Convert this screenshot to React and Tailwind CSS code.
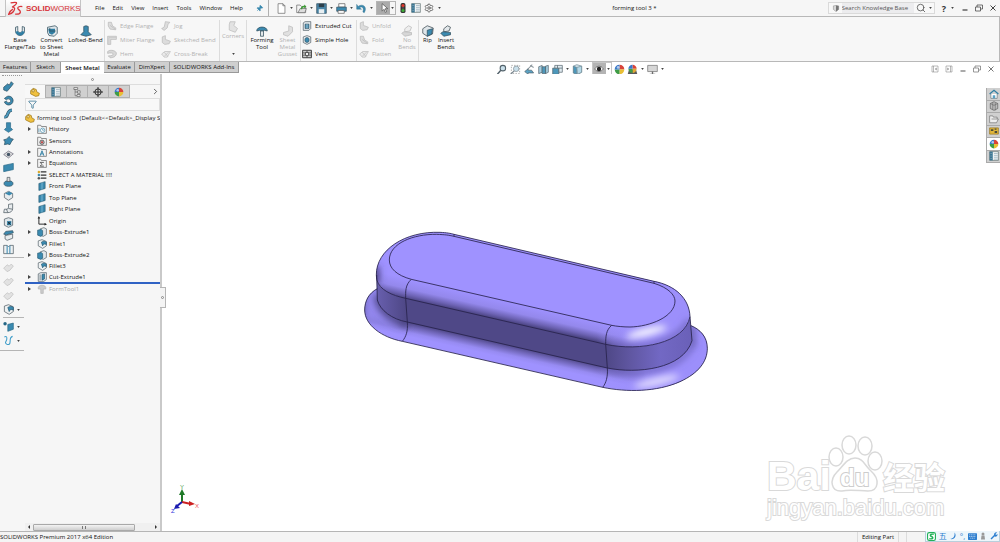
import { ChevronRight, Filter, Pin, Search, Settings } from "lucide-react";

const ICONS = {
  flange: <><path d="M2 3l3-1v5c0 4 6 4 6 0V2l3 1v5c0 8-12 8-12 0z" fill="#dfe6ea" stroke="#33505f" /><path d="M5 8c1 3 5 3 6 0l3 1c-1 6-10 7-12 0z" fill="#2f7ea3" /></>,
  convert: <><path d="M2 3l10-2 3 2v8l-4 4-7-1-2-4z" fill="#dfe6ea" stroke="#33505f" /><path d="M3 5h9v5l-4 3-4-2z" fill="#2f7ea3" /><path d="M5 4v4h8" stroke="#33505f" fill="none" /></>,
  loft: <path d="M5 2l3-1 3 1v7l4 4-7 2-7-2 4-4z" fill="#3b8ab0" stroke="#33505f" />,
  forming: <><path d="M1 8c0-7 14-7 14 0l-4-1-3 1-3-1z" fill="#3b8ab0" stroke="#33505f" /><path d="M6 8h4v7H6z" fill="#e3e8eb" stroke="#33505f" /></>,
  gusset: <path d="M9 1l5 2v6l-6 6-6-2v-3l7-2z" fill="#e0e0e0" stroke="#bcbcbc" />,
  edge: <><path d="M2 2h5l2 6 5 3v3l-9-1-3-5z" fill="#dcdcdc" stroke="#b3b3b3" /><path d="M5 7l8 6" stroke="#b3b3b3" /></>,
  miter: <><path d="M1 2h14v5H6v8H1z" fill="#dcdcdc" stroke="#b3b3b3" /><path d="M3 4h12M3 4v11" stroke="#c4c4c4" /></>,
  hem: <path d="M1 4c5-4 14-1 14 3s-4 7-10 7l-3-3c5 0 8-1 8-3S5 6 1 7z" fill="#d8d8d8" stroke="#b0b0b0" />,
  jog: <path d="M7 1l7 1-3 4-1 5-5 4-4-3 4-2z" fill="#dcdcdc" stroke="#b3b3b3" />,
  sketched: <path d="M2 3l5-2v6l8 3-2 4-7 1-4-3z" fill="#dcdcdc" stroke="#b3b3b3" />,
  cross: <><path d="M1 8l5-4h9l-5 9H5z" fill="#eaeaea" stroke="#b8b8b8" /><path d="M5 12l7-7M5 5l6 7" stroke="#b8b8b8" /></>,
  corner: <path d="M4 1h7l-2 5 5 4-3 5-8-3V5z" fill="#e2e2e2" stroke="#bcbcbc" />,
  noBends: <><path d="M5 5l5-4 4 2-2 5-7 1z" fill="#eee" stroke="#b8b8b8" /><path d="M1 11l3-2 10 1v3l-9 2z" fill="#d6d6d6" stroke="#b8b8b8" /></>,
  extrudedCut: <><path d="M2 3l3-2h9v11l-3 3H2z" fill="#dfe6ea" stroke="#3d4b53" /><path d="M5 5h6v7H5z" fill="#3b8ab0" stroke="#33505f" /><path d="M8 5v7" stroke="#dfe6ea" /></>,
  hole: <><path d="M2 3l6-2 6 2v9l-6 3-6-3z" fill="#e8ecee" stroke="#3d4b53" /><ellipse cx="8" cy="8" rx="3.500" ry="4" fill="#3b8ab0" stroke="#33505f" /></>,
  vent: <><path d="M1 2h14v12H1z" fill="#ccc" stroke="#333" strokeWidth="1.500" /><path d="M1 6h14M1 10h14M8 2v12" stroke="#444" /><circle cx="8" cy="8" r="3" fill="#eee" stroke="#333" strokeWidth="1.500" /></>,
  rip: <><path d="M1 5l6-4 8 3-1 8-7 3-6-4z" fill="#dfe6ea" stroke="#3d4b53" /><path d="M7 7l7-2-1 7-6 3z" fill="#3b8ab0" stroke="#33505f" /></>,
  insert: <><path d="M5 5l5-4 4 2-2 5-7 1z" fill="#e3e8eb" stroke="#3d4b53" /><path d="M1 11l3-2 10 1v3l-9 2z" fill="#3b8ab0" stroke="#33505f" /></>,
  newDoc: <path d="M3 1h7l3 3v11H3zM10 1v3h3" fill="#fff" stroke="#666" />,
  open: <><path d="M1 3h5l2 2h6v9H1z" fill="#f4f4f4" stroke="#666" /><path d="M3 14l3-6h9l-2 6z" fill="#ddd" stroke="#666" /><path d="M7 9c0-4 2-5 5-5V2l3 3-3 3V6c-2 0-3 1-3 3z" fill="#3c9a35" /></>,
  save: <><path d="M1 1h14v14H1z" fill="#4a86a8" stroke="#33505f" /><path d="M4 1h8v5H4z" fill="#2c3f4a" /><path d="M4 9h8v6H4z" fill="#e8eef1" /></>,
  print: <><path d="M4 1h9v5H4z" fill="#fff" stroke="#555" /><path d="M1 6h14v6H1z" fill="#3b8ab0" stroke="#33505f" /><path d="M3 11h9v4H3z" fill="#fff" stroke="#555" /></>,
  undo: <path d="M1 2v7h7L5 7c4-3 7 0 5 6l2 1c5-8-2-14-9-9z" fill="#3b8ab0" stroke="#256685" strokeWidth="0.6" />,
  cursor: <path d="M5 1v12l3-3 2 5 2-1-2-5h4z" fill="#fff" stroke="#444" />,
  light: <><rect x="4" y="0" width="8" height="16" rx="3" fill="#333" /><circle cx="8" cy="4" r="2.500" fill="#e0382f" /><circle cx="8" cy="8" r="1.500" fill="#555" /><circle cx="8" cy="12" r="2.500" fill="#3fae3a" /></>,
  sheet: <><path d="M1 1h14v14H1z" fill="#eef2f4" stroke="#566" /><path d="M1 1h5v14H1z" fill="#3b7795" /><path d="M8 4h6M8 7h6M8 10h6M8 13h6M2 4h3M2 8h3M2 12h3" stroke="#8aa5b3" /></>,
  zoomFit: <><circle cx="10" cy="6" r="4" fill="#c9dfea" stroke="#52616a" strokeWidth="1.500" /><path d="M7 9l-5 6" stroke="#52616a" strokeWidth="2" /></>,
  zoomArea: <><path d="M2 2h12v12H2z" fill="none" stroke="#888" strokeDasharray="2 2" /><circle cx="9" cy="7" r="4" fill="#c9dfea" stroke="#7d8a92" /><path d="M6 10l-5 5" stroke="#7d8a92" strokeWidth="2" /></>,
  prev: <><path d="M12 1L5 8M9 2l5 3" stroke="#8a959b" strokeWidth="1.500" /><path d="M1 11l5-4v2h5l3 4H6v2z" fill="#5aa2c4" stroke="#52616a" /></>,
  section: <><path d="M1 4l5-2v10l-5 2zM11 3l4-1v10l-4 2z" fill="#a9cfe0" stroke="#52616a" /><path d="M6 4h5v10H6z" fill="#4d97ba" stroke="#52616a" /></>,
  orient: <><path d="M1 6h9v9H1z" fill="#4d97ba" stroke="#52616a" /><path d="M4 2h11v10h-5V6H4z" fill="#e0ebf0" stroke="#52616a" /><path d="M8 2v4M15 6h-5" stroke="#52616a" /></>,
  cube: <><path d="M2 3l5-2 7 2v9l-6 3-6-2z" fill="#d4e6ee" stroke="#6f8792" /><path d="M2 3l5 2v10l-5-2z" fill="#4d97ba" stroke="#6f8792" /><path d="M7 5l7-2v9l-6 3z" fill="#b5d9e8" stroke="#6f8792" /></>,
  eye: <><path d="M1 8c4-6 10-6 14 0-4 5-10 5-14 0z" fill="#fff" stroke="#444" /><circle cx="8" cy="8" r="3.500" fill="#222" /></>,
  ball: <><path d="M8 8V1a7 7 0 0 1 7 7z" fill="#d8433a" /><path d="M8 8h7a7 7 0 0 1-7 7z" fill="#e9bf35" /><path d="M8 8v7a7 7 0 0 1-7-7z" fill="#3f9c47" /><path d="M8 8H1a7 7 0 0 1 7-7z" fill="#3a78c9" /><circle cx="6" cy="5" r="2" fill="#fff" opacity=".6" /></>,
  scene: <><path d="M1 15l2-7h10l2 7z" fill="#5a5a5a" /><path d="M8 7V1a6 6 0 0 1 6 6z" fill="#d8433a" /><path d="M8 7h6a6 6 0 0 1-6 6z" fill="#e0a835" /><path d="M8 7v6a6 6 0 0 1-6-6z" fill="#3f9c47" /><path d="M8 7H2a6 6 0 0 1 6-6z" fill="#3a78c9" /></>,
  monitor: <><path d="M1 2h14v9H1z" fill="#d6d6d6" stroke="#6d6d6d" /><path d="M8 11v3M4 15h8" stroke="#6d6d6d" strokeWidth="2" /></>,
  paneL: <path d="M2 2h12v12H2zM5 2v12M11 6L8 8l3 2z" fill="none" stroke="#777" />,
  paneR: <path d="M2 2h12v12H2zM11 2v12M5 6l3 2-3 2z" fill="none" stroke="#777" />,
  min: <path d="M3 12h10" stroke="currentColor" strokeWidth="2.500" />,
  restore: <path d="M1 6h10v8H1zM4 6V2h11v8h-4" fill="none" stroke="currentColor" strokeWidth="1.500" />,
  close: <path d="M3 3l10 10M13 3L3 13" stroke="currentColor" strokeWidth="2" />,
  shield: <><path d="M2 2l6-1 6 1v8l-6 5-6-5z" fill="#d8d8d8" stroke="#777" /><path d="M8 1v14l6-5V2z" fill="#777" /></>,
  part: <><path d="M1 6l4-4 5 2 1 4 4 2-1 4-5 1-8-4z" fill="#f0c140" stroke="#8f6a12" /><circle cx="5" cy="6" r="2" fill="#fbe7a6" stroke="#8f6a12" /></>,
  config: <path d="M3 1h6v3H3zM5 4v10h3M5 8h4M9 6h4v4H9zM8 12h5v3H8z" fill="#eee" stroke="#555" />,
  target: <><circle cx="8" cy="8" r="5" fill="none" stroke="#222" strokeWidth="1.500" /><path d="M8 0v16M0 8h16" stroke="#222" strokeWidth="1.500" /></>,
  history: <><path d="M1 2h5l1 2h8v11H1z" fill="#f3f3f3" stroke="#555" /><circle cx="9" cy="10" r="3.500" fill="#fff" stroke="#2f7ea3" /><path d="M9 8v2h2M3 7v6" stroke="#2f7ea3" /></>,
  sensors: <><path d="M1 2h5l1 2h8v11H1z" fill="#f3f3f3" stroke="#555" /><circle cx="8" cy="10" r="3.500" fill="#bbb" stroke="#333" /><circle cx="8" cy="10" r="1.500" fill="#c33" /></>,
  annot: <><path d="M1 2h5l1 2h8v11H1z" fill="#f3f3f3" stroke="#555" /><path d="M5 14l3-8 3 8M6 11h4" fill="none" stroke="#2f7ea3" strokeWidth="1.500" /></>,
  equations: <><path d="M1 2h5l1 2h8v11H1z" fill="#f3f3f3" stroke="#555" /><path d="M11 7H5l3 3-3 3h6" fill="none" stroke="#333" strokeWidth="1.200" /></>,
  material: <><path d="M6 3h9M6 8h9M6 13h9" stroke="#333" strokeWidth="2" /><circle cx="3" cy="3" r="2" fill="#d9a92a" /><circle cx="3" cy="8" r="2" fill="#3b8ab0" /><circle cx="3" cy="13" r="2" fill="#555" /></>,
  plane: <><path d="M3 4l10-3v11L3 15z" fill="#3b8ab0" stroke="#24566f" /><path d="M8 2v12" stroke="#9fd0e6" /></>,
  origin: <><path d="M3 2v11h11" fill="none" stroke="#222" strokeWidth="1.500" /><path d="M3 0l2 4H1zM16 13l-4-2v4z" fill="#222" /></>,
  boss: <><path d="M5 3l6-2 4 2v9l-5 3-5-2z" fill="#e3e8eb" stroke="#44525a" /><path d="M1 5l6-1 2 2v7l-3 2-5-2z" fill="#3b8ab0" stroke="#24566f" /></>,
  fillet: <><path d="M2 3l6-2 7 3v7l-6 4-7-4z" fill="#eef1f2" stroke="#44525a" /><path d="M7 5c3-2 6-2 8 0v4c-3-2-5-1-6 2z" fill="#3b8ab0" stroke="#24566f" /></>,
  cut: <><path d="M2 3l4-2h9v11l-4 3H2z" fill="#e3e8eb" stroke="#44525a" /><path d="M8 4l4-1v8l-4 2z" fill="#3b8ab0" stroke="#24566f" /><path d="M5 4v9" stroke="#44525a" /></>,
  formTool: <path d="M2 5c2-4 10-4 12 0v3h-4v7H6V8H2z" fill="#ccc" stroke="#b0b0b0" />,
  tEdit: <path d="M1 9l6-5 2 2 3-5 3 3-3 4-6 7-5-2z" fill="#3b8ab0" stroke="#2b4c5c" />,
  tRevolve: <path d="M6 2a6.500 6.500 0 1 1-4 8l3-1c2 4 7 2 6-1S7 5 5 7L2 5z" fill="#3b8ab0" stroke="#2b4c5c" />,
  tSweep: <><path d="M2 13C9 14 4 4 13 3" fill="none" stroke="#2b4c5c" strokeWidth="4.500" /><path d="M2 13C9 14 4 4 13 3" fill="none" stroke="#4d97ba" strokeWidth="3" /></>,
  tLoft: <path d="M5 1h6v7l3 3-6 4-6-4 3-3z" fill="#3b8ab0" stroke="#2b6a88" />,
  tFlat: <path d="M1 7l4-1 4-4 2 3 4 1-3 4-2 4-3-1-5 1 1-4z" fill="#3b8ab0" stroke="#2b4c5c" />,
  tBoundary: <><path d="M1 8l7-5 7 4-7 6z" fill="#ddd" stroke="#667" /><circle cx="8" cy="8" r="2.500" fill="#456" /></>,
  tPlane: <path d="M1 5l14-3v9L1 14z" fill="#3b8ab0" stroke="#256685" />,
  tDome: <><ellipse cx="8" cy="11" rx="6.500" ry="4" fill="#3b8ab0" stroke="#2b4c5c" /><path d="M6 2h4v6H6z" fill="#ddd" stroke="#44525a" /></>,
  tShell: <><path d="M2 5l6-3 6 3v6l-6 4-6-4z" fill="#e8ecee" stroke="#44525a" /><path d="M3 5l6-3 5 3-5 3z" fill="#3b8ab0" /></>,
  tDraft: <><path d="M3 8l11-2v6l-8 3-3-2z" fill="#e8ecee" stroke="#44525a" /><path d="M1 6l3-4 10-1 1 3-10 3z" fill="#3b8ab0" stroke="#2b4c5c" /></>,
  tBend: <><path d="M8 2l6-1v7c0 4-3 6-7 6H1l1-5h3c2 0 3-1 3-3z" fill="#e8ecee" stroke="#44525a" /><path d="M8 8l6 1M5 9l2 5" stroke="#44525a" /></>,
  tDelete: <><path d="M2 3l6-2 6 2v9l-6 3-6-3z" fill="#dfe6ea" stroke="#44525a" /><path d="M6 6h6v6H6z" fill="#2f7ea3" /><path d="M7 7l4 4M11 7l-4 4" stroke="#111" /></>,
  tKnit: <><path d="M1 2h5l2 2 2-2h5v12H1z" fill="#eef1f2" stroke="#44525a" /><path d="M6 2v12M10 2v12" stroke="#3b8ab0" strokeWidth="1.500" /></>,
  tGhost: <path d="M1 9l5-5 3 2 3-3 3 3-5 6-4 2z" fill="#e2e2e2" stroke="#bebebe" />,
  refGeo: <><path d="M7 5l8-2v9l-8 3z" fill="#3b8ab0" stroke="#256685" /><circle cx="3" cy="4" r="2.500" fill="#256685" /></>,
  curve: <path d="M2 3c5-3 4 4 2 7s5 6 6 2-1-9 4-10" fill="none" stroke="#3d9cc9" strokeWidth="1.500" />,
  home: <><path d="M3 8v7h10V8" fill="#fff" stroke="#5a6b74" /><path d="M1 8l7-6 7 6" fill="none" stroke="#2f7ea3" strokeWidth="2" /><path d="M6 10h4v5H6z" fill="#5aa2c4" /></>,
  library: <><path d="M2 4l6-3 6 3v8l-6 3-6-3z" fill="#bbb" stroke="#555" /><path d="M6 2v12M10 3v12M2 4l6 3 6-3" stroke="#666" fill="none" /></>,
  folder: <path d="M1 3h5l1 2h6v3h2l-3 6H1zM4 8h9" fill="#eee" stroke="#666" />,
  palette: <><path d="M1 3h14v10H1z" fill="#e0b63c" stroke="#8f6a12" /><path d="M3 5h4v3H3zM9 8h4v3H9zM9 4h3v2H9z" fill="#4b4b3a" /></>,
};

function Icon({ name, className = "h-[10px] w-[10px]" }) {
  return (
    <svg viewBox="0 0 16 16" className={`shrink-0 ${className}`} aria-hidden="true">
      <g fill="none">{ICONS[name]}</g>
    </svg>
  );
}

function Caret() {
  return <svg viewBox="0 0 4 3" className="h-[2px] w-[3px] shrink-0" aria-hidden="true"><path d="M0 0h4L2 3z" fill="#444" /></svg>;
}

function Drop({ name, label }) {
  return (
    <button aria-label={label} className="flex w-[20px] shrink-0 items-center justify-between pr-[3px]">
      <Icon name={name} className="h-[11px] w-[11px]" />
      <Caret />
    </button>
  );
}

const MENUS = ["File", "Edit", "View", "Insert", "Tools", "Window", "Help"];

function TitleBar() {
  return (
    <header className="flex h-[17px] items-center border-b border-[#b8b8b8] bg-[#f6f6f6]">
      <div className="ml-[5px] flex h-[18px] w-[76px] shrink-0 items-center gap-[3px] self-start border border-t-0 border-[#c4c4c4] bg-linear-to-b from-white to-[#e4e4e4] pl-[2px] text-[#d8343a]">
        <svg viewBox="0 0 46 44" className="h-[15px] w-[15px] shrink-0" fill="none" stroke="currentColor" strokeWidth="4">
          <path d="M8 5c8-2 15-3 18-1 2 3-5 9-12 13" />
          <path d="M12 17c9 0 11 6 4 15-4 5-8 8-14 8 3-7 7-13 13-16" />
          <path d="M44 16c-9-1-14 1-14 5 0 5 9 6 8 12-1 5-8 7-16 6" />
        </svg>
        <span className="text-[8px] leading-none font-['Liberation_Sans',sans-serif]"><b>SOLID</b>WORKS</span>
      </div>
      <nav className="ml-[14px] flex shrink-0 gap-[8px] text-[#111]">
        {MENUS.map((m) => <button key={m}>{m}</button>)}
      </nav>
      <button aria-label="Pin menu" className="ml-[13px] flex w-[12px]"><Pin size={7} className="rotate-45 fill-[#3b8ab0] text-[#3b8ab0]" /></button>
      <div className="flex h-full shrink-0 items-center border-l border-[#b0b0b0] pl-[7px]">
        <Drop name="newDoc" label="New" />
        <Drop name="open" label="Open" />
        <Drop name="save" label="Save" />
        <Drop name="print" label="Print" />
        <Drop name="undo" label="Undo" />
        <button aria-label="Select" className="flex h-[14px] w-[20px] items-center gap-[1px] border border-[#b5b5b5]">
          <span className="flex h-full w-[13px] items-center justify-center bg-[#ababab]"><Icon name="cursor" /></span>
          <Caret />
        </button>
        <button aria-label="Rebuild" className="ml-[2px]"><Icon name="light" /></button>
        <button aria-label="File properties" className="ml-[3px]"><Icon name="sheet" /></button>
        <button aria-label="Options" className="ml-[3px] flex items-center gap-[4px]"><Settings size={10} className="text-[#555]" /><Caret /></button>
      </div>
      <h1 className="flex-1 text-center font-medium text-[#111]">forming tool 3 *</h1>
      <div className="flex h-[12px] shrink-0 items-center border border-[#dadada] bg-[#f8f8f8] pl-[3px]">
        <Icon name="shield" className="h-[7px] w-[8px]" />
        <input aria-label="Search Knowledge Base" placeholder="Search Knowledge Base" className="ml-[2px] w-[72px] bg-[#ececee] leading-[10px] placeholder-[#555] outline-none" />
        <button aria-label="Search" className="ml-[2px] flex items-center gap-[3px] pr-[2px]"><Search size={10} className="text-[#555]" /><Caret /></button>
      </div>
      <button aria-label="Help topics" className="ml-[7px] flex items-center gap-[5px] text-[9px] leading-none font-bold text-[#333]">?<Caret /></button>
      <div className="ml-[6px] mr-[2px] flex shrink-0 gap-[4px] text-[#444]">
        <button aria-label="Minimize"><Icon name="min" className="h-[8px] w-[10px]" /></button>
        <button aria-label="Restore"><Icon name="restore" className="h-[8px] w-[10px]" /></button>
        <button aria-label="Close"><Icon name="close" className="h-[8px] w-[10px]" /></button>
      </div>
    </header>
  );
}

function BigTool({ icon, label, width, off }) {
  return (
    <button className={`flex flex-col items-center ${width} ${off ? "text-[#b2b2b2]" : "text-[#111]"}`}>
      <Icon name={icon} className="h-[12px] w-[12px]" />
      <span className="whitespace-pre leading-[7px]">{label}</span>
    </button>
  );
}

function ToolList({ items, width, off }) {
  return (
    <div className={`flex flex-col justify-between pt-[1px] pb-[2px] ${width} ${off ? "text-[#b2b2b2]" : "text-[#111]"}`}>
      {items.map(([icon, label]) => (
        <button key={label} className="flex items-center gap-[3px] whitespace-nowrap"><Icon name={icon} />{label}</button>
      ))}
    </div>
  );
}

function Ribbon() {
  return (
    <section aria-label="Sheet metal commands" className="flex h-[45px] border-r border-b border-[#b8b8b8] bg-[#f7f7f7] pt-[3px]">
      <div className="flex w-[105px] border-r border-[#dcdcdc] pt-[5px] pl-[4px]">
        <BigTool icon="flange" label={"Base\nFlange/Tab"} width="w-[32px]" />
        <BigTool icon="convert" label={"Convert\nto Sheet\nMetal"} width="w-[31px]" />
        <BigTool icon="loft" label="Lofted-Bend" width="w-[37px]" />
      </div>
      <div className="flex w-[115px] border-r border-[#dcdcdc] pl-[2px]">
        <ToolList off width="w-[54px]" items={[["edge", "Edge Flange"], ["miter", "Miter Flange"], ["hem", "Hem"]]} />
        <ToolList off width="w-[58px]" items={[["jog", "Jog"], ["sketched", "Sketched Bend"], ["cross", "Cross-Break"]]} />
      </div>
      <div className="flex w-[27px] flex-col items-center border-r border-[#dcdcdc] pt-[1px]">
        <BigTool off icon="corner" label="Corners" width="w-[26px]" />
        <span className="mt-[13px] flex"><Caret /></span>
      </div>
      <div className="flex w-[54px] border-r border-[#dcdcdc] pt-[5px] pl-[2px]">
        <BigTool icon="forming" label={"Forming\nTool"} width="w-[26px]" />
        <BigTool off icon="gusset" label={"Sheet\nMetal\nGusset"} width="w-[25px]" />
      </div>
      <div className="flex w-[56px] border-r border-[#dcdcdc] pl-[1px]">
        <ToolList width="w-[54px]" items={[["extrudedCut", "Extruded Cut"], ["hole", "Simple Hole"], ["vent", "Vent"]]} />
      </div>
      <div className="flex w-[62px] border-r border-[#dcdcdc] pl-[2px]">
        <ToolList off width="w-[38px]" items={[["sketched", "Unfold"], ["edge", "Fold"], ["cross", "Flatten"]]} />
        <div className="pt-[5px]"><BigTool off icon="noBends" label={"No\nBends"} width="w-[20px]" /></div>
      </div>
      <div className="flex pt-[5px]">
        <BigTool icon="rip" label="Rip" width="w-[17px]" />
        <BigTool icon="insert" label={"Insert\nBends"} width="w-[20px]" />
      </div>
    </section>
  );
}

const TABS = [
  ["Features", "w-[31px]"],
  ["Sketch", "w-[30px]"],
  ["Sheet Metal", "w-[43px]"],
  ["Evaluate", "w-[31px]"],
  ["DimXpert", "w-[35px]"],
  ["SOLIDWORKS Add-Ins", "w-[69px]"],
];

function TabRow() {
  return (
    <div className="flex h-[12px]">
      <div role="tablist" className="flex shrink-0 text-[#111]">
        {TABS.map(([label, width]) => (
          <button
            key={label}
            role="tab"
            aria-selected={label === "Sheet Metal"}
            className={`flex h-[11px] items-center justify-center whitespace-nowrap ${width} ${label === "Sheet Metal" ? "bg-white font-semibold" : "border-r border-b border-[#999] bg-[#cfcfcf]"}`}
          >
            {label}
          </button>
        ))}
      </div>
      <div className="flex h-[14px] flex-1 items-center justify-center pr-[8px]">
        <div className="mr-[3px] flex gap-[3px]">
          <Icon name="zoomFit" className="h-[11px] w-[11px]" />
          <Icon name="zoomArea" className="h-[11px] w-[11px]" />
          <Icon name="prev" className="h-[11px] w-[11px]" />
          <Icon name="section" className="h-[11px] w-[11px]" />
        </div>
        <Drop name="orient" label="View orientation" />
        <Drop name="cube" label="Display style" />
        <button aria-label="Hide/show items" className="flex h-[14px] w-[20px] items-center gap-[1px] border border-[#c6c6c6]">
          <span className="flex h-full w-[13px] items-center justify-center bg-[#b4b4b4]"><Icon name="eye" /></span>
          <Caret />
        </button>
        <Icon name="ball" className="mx-[2px] h-[11px] w-[11px]" />
        <Drop name="scene" label="Apply scene" />
        <Drop name="monitor" label="View settings" />
      </div>
      <div className="mr-[5px] flex h-[14px] w-[64px] items-center justify-between text-[#777]">
        <Icon name="paneL" className="h-[8px] w-[8px]" />
        <Icon name="paneR" className="h-[8px] w-[8px]" />
        <Icon name="min" className="h-[8px] w-[8px]" />
        <Icon name="restore" className="h-[8px] w-[8px]" />
        <Icon name="close" className="h-[8px] w-[8px]" />
      </div>
    </div>
  );
}

const SIDE_TOOLS = ["tEdit", "tRevolve", "tSweep", "tLoft", "tFlat", "tBoundary", "tPlane", "tDome", "tShell", "tBend", "tDelete", "tDraft", "tKnit"];

function SideTools() {
  return (
    <aside aria-label="Features toolbar" className="flex w-[24px] shrink-0 flex-col bg-[#f6f6f6] pt-[1px]">
      <div className="mx-[2px] w-[20px] border-t border-dotted border-[#999]" />
      <div className="mt-[5px] flex h-[174px] flex-col justify-between pl-[3px]">
        {SIDE_TOOLS.map((name) => <Icon key={name} name={name} className="h-[11px] w-[11px]" />)}
      </div>
      <div className="mt-[2px] ml-[3px] border-t border-[#b5b5b5]" />
      <div className="mt-[4px] flex flex-col gap-[3px] pl-[3px]">
        <Icon name="tGhost" className="h-[11px] w-[11px]" />
        <Icon name="tGhost" className="h-[11px] w-[11px]" />
        <Icon name="tGhost" className="h-[11px] w-[11px]" />
        <Drop name="fillet" label="Fillet" />
      </div>
      <div className="mt-[2px] ml-[3px] border-t border-[#b5b5b5]" />
      <div className="mt-[3px] flex flex-col gap-[3px] pl-[3px]">
        <Drop name="refGeo" label="Reference geometry" />
        <Drop name="curve" label="Curves" />
      </div>
      <div className="mt-[4px] border-t border-[#b5b5b5]" />
    </aside>
  );
}

const TREE = [
  { icon: "history", label: "History", open: true },
  { icon: "sensors", label: "Sensors" },
  { icon: "annot", label: "Annotations", open: true },
  { icon: "equations", label: "Equations", open: true },
  { icon: "material", label: "SELECT A MATERIAL !!!!" },
  { icon: "plane", label: "Front Plane" },
  { icon: "plane", label: "Top Plane" },
  { icon: "plane", label: "Right Plane" },
  { icon: "origin", label: "Origin" },
  { icon: "boss", label: "Boss-Extrude1", open: true },
  { icon: "fillet", label: "Fillet1" },
  { icon: "boss", label: "Boss-Extrude2", open: true },
  { icon: "fillet", label: "Fillet3" },
  { icon: "cut", label: "Cut-Extrude1", open: true, rollback: true },
  { icon: "formTool", label: "FormTool1", open: true, off: true },
];

const PANEL_TABS = [["sheet", "Properties"], ["config", "Configurations"], ["target", "DimXpert manager"], ["ball", "Display manager"]];

function FeaturePanel() {
  return (
    <aside aria-label="Feature manager" className="relative z-10 flex w-[138px] shrink-0 flex-col border-r-2 border-[#c9c9c9] bg-[#f6f6f6] pl-[1px]">
      <div className="flex h-[10px] items-center justify-center"><span className="h-[3px] w-[3px] rounded-full border border-[#888]" /></div>
      <div role="tablist" className="flex h-[14px] items-center border-t border-[#ddd]">
        <button role="tab" aria-selected="true" aria-label="Feature tree" className="flex h-full w-[20px] items-center justify-center bg-[#f8f8f8]"><Icon name="part" /></button>
        <div className="flex h-full border-l border-[#b0b0b0]">
          {PANEL_TABS.map(([name, label]) => (
            <button key={name} role="tab" aria-label={label} className="flex h-full w-[21px] items-center justify-center border-y border-r border-[#b0b0b0] bg-[#d0d0d0]"><Icon name={name} /></button>
          ))}
        </div>
        <button aria-label="More tabs" className="ml-auto"><ChevronRight size={9} className="text-[#333]" /></button>
      </div>
      <label className="flex h-[13px] items-center border border-[#dedede] bg-[#f8f8f8] pl-[2px]">
        <Filter size={9} className="text-[#2f6f8f]" />
        <input aria-label="Filter" className="min-w-0 flex-1 outline-none" />
      </label>
      <ul className="mt-[1px] grid h-[183px] auto-rows-fr overflow-hidden whitespace-nowrap text-[#111]">
        <li className="flex items-center gap-[2px]"><Icon name="part" />forming tool 3&nbsp; (Default&lt;&lt;Default&gt;_Display S</li>
        {TREE.map((row) => (
          <li key={row.label} className={`flex items-center pl-[3px] ${row.rollback ? "border-b-2 border-[#2f62c4]" : ""} ${row.off ? "text-[#a8a8a8]" : ""}`}>
            <span className="flex w-[9px] shrink-0">
              {row.open && <svg viewBox="0 0 3 4" className="h-[4px] w-[3px]"><path d="M0 0l3 2-3 2z" fill="#444" /></svg>}
            </span>
            <Icon name={row.icon} />
            <span className="ml-[2px]">{row.label}</span>
          </li>
        ))}
      </ul>
      <div className="mt-auto flex h-[8px] items-center gap-[3px] bg-[#f0f0f0] px-[3px]">
        <span className="h-0 w-0 border-y-2 border-r-2 border-y-transparent border-r-[#333]" />
        <span className="flex h-[7px] w-[102px] items-center justify-center rounded-[1px] border border-[#a9a9a9] bg-linear-to-b from-[#f4f4f4] to-[#cfcfcf]">
          <span className="h-[3px] w-[4px] border-x border-[#777]" />
        </span>
        <span className="ml-auto h-0 w-0 border-y-2 border-l-2 border-y-transparent border-l-[#333]" />
      </div>
      <div className="absolute top-[213px] -right-[6px] flex h-[21px] w-[6px] items-center justify-center border border-l-0 border-[#b5b5b5] bg-[#f4f4f4]">
        <span className="h-[3px] w-[3px] rounded-full border border-[#888]" />
      </div>
    </aside>
  );
}

const BASE = "M82 206C55 220 44 245 44 270C44 315 95 352 157 364L758 502C830 517 920 516 990 485C1045 460 1072 425 1072 385C1072 350 1050 328 1023 317L900 280L200 200Z";
const WALL = "M80 178C88 210 125 226 167 235L767 373C870 395 1005 370 1020 290L1026 362C1000 448 860 462 772 444L172 306C125 298 90 270 82 240Z";
const SHELL = "M79 165C78 90 165 33 270 37C290 38 302 40 312 43L912 184C975 196 1018 235 1020 290C1005 370 870 395 767 373L167 235C125 226 88 210 80 178Z";
const TOP = "M184 178C140 166 118 145 118 120C118 70 190 42 260 43C285 44 295 45 312 49L912 190C955 203 975 225 975 243C975 290 900 320 840 321C820 321 800 319 785 316Z";

function Model() {
  return (
    <svg viewBox="0 0 1110 540" className="absolute top-[146px] left-[188px] h-[180px] w-[370px]" role="img" aria-label="Forming tool part">
      <defs>
        <linearGradient id="fillet" gradientUnits="userSpaceOnUse" x1="184" y1="178" x2="171" y2="236">
          <stop offset="0" stopColor="#9f92ff" />
          <stop offset="0.5" stopColor="#9488ec" />
          <stop offset="0.8" stopColor="#6d63b4" />
          <stop offset="1" stopColor="#4d4685" />
        </linearGradient>
        <linearGradient id="foot" gradientUnits="userSpaceOnUse" x1="172" y1="306" x2="159" y2="364">
          <stop offset="0" stopColor="#4d4685" />
          <stop offset="0.2" stopColor="#6d63b4" />
          <stop offset="0.5" stopColor="#978bf2" />
          <stop offset="0.7" stopColor="#9f92ff" />
        </linearGradient>
        <linearGradient id="wall" gradientUnits="userSpaceOnUse" x1="80" y1="0" x2="1026" y2="0">
          <stop offset="0" stopColor="#685fae" />
          <stop offset="0.09" stopColor="#4f4887" />
          <stop offset="0.73" stopColor="#4f4887" />
          <stop offset="0.8" stopColor="#5f56a0" />
          <stop offset="0.9" stopColor="#7268c4" />
          <stop offset="1" stopColor="#6a60b8" />
        </linearGradient>
        <linearGradient id="fade" gradientUnits="userSpaceOnUse" x1="740" y1="0" x2="890" y2="0">
          <stop offset="0" stopColor="#9c8ffb" stopOpacity="0" />
          <stop offset="1" stopColor="#9c8ffb" />
        </linearGradient>
        <filter id="soft" filterUnits="userSpaceOnUse" x="0" y="0" width="1110" height="540"><feGaussianBlur stdDeviation="11" /></filter>
        <clipPath id="shellClip"><path d={SHELL} /></clipPath>
        <clipPath id="baseClip"><path d={BASE} /></clipPath>
      </defs>
      <path d={BASE} fill="url(#foot)" />
      <g clipPath="url(#baseClip)">
        <path d="M740 280H1110V540H740z" fill="url(#fade)" />
        <path d="M40 190H150V330L40 300z" fill="#9387ee" filter="url(#soft)" />
        <path d="M84 225C86 262 120 300 176 312" stroke="#4d4685" strokeWidth="24" fill="none" filter="url(#soft)" />
        <path d="M772 448C860 470 1000 450 1030 365" stroke="#6a60b8" strokeWidth="14" fill="none" filter="url(#soft)" />
        <ellipse cx="920" cy="484" rx="70" ry="10" transform="rotate(-13 920 484)" fill="#ece8ff" filter="url(#soft)" />
        <path d="M1026 315V375" stroke="#5f56a0" strokeWidth="16" filter="url(#soft)" />
      </g>
      <path d={WALL} fill="url(#wall)" />
      <path d={SHELL} fill="url(#fillet)" />
      <g clipPath="url(#shellClip)">
        <path d="M740 150H1110V400H740z" fill="url(#fade)" />
        <path d="M76 140V190" stroke="#3f396f" strokeWidth="22" filter="url(#soft)" />
        <path d="M790 378C900 390 990 360 1018 300" stroke="#6a60b8" strokeWidth="14" fill="none" filter="url(#soft)" />
        <ellipse cx="890" cy="336" rx="62" ry="11" transform="rotate(-14 890 336)" fill="#fff" filter="url(#soft)" />
      </g>
      <path d={TOP} fill="#9f92ff" />
      <g fill="none" stroke="#26224a" strokeWidth="2.500">
        <path d={TOP} />
        <path d={SHELL} />
        <path d="M82 206C55 220 44 245 44 270C44 315 95 352 157 364L758 502C830 517 920 516 990 485C1045 460 1072 425 1072 385C1072 350 1050 328 1023 317" />
        <path d="M80 165L82 240C90 270 125 298 172 306L772 444C860 462 1000 448 1026 362L1020 290" />
        <path d="M184 178C165 195 167 215 167 235L172 306C174 335 168 350 157 364M785 316C768 330 767 350 767 373L772 444C774 470 768 490 758 502M312 43V49M912 184V190" />
      </g>
    </svg>
  );
}

function Triad() {
  return (
    <svg viewBox="0 0 32 32" className="absolute bottom-[14px] left-[8px] h-[32px] w-[32px] overflow-visible" role="img" aria-label="Axes">
      <path d="M12 17V8" stroke="#1f7a28" strokeWidth="2" /><path d="M12 4l3 6H9z" fill="#1f7a28" />
      <path d="M12 17l9 2" stroke="#c22" strokeWidth="2" /><path d="M25 19l-6-3v5z" fill="#c22" />
      <path d="M12 17l-5 4" stroke="#1b1bb0" strokeWidth="2" /><path d="M4 24l2-5 4 4z" fill="#1b1bb0" />
      <g fontSize="6" fontFamily="Liberation Sans, sans-serif">
        <text x="10" y="4" fill="#4a9a4a">Y</text>
        <text x="25" y="23" fill="#e55">X</text>
        <text x="1" y="28" fill="#33d">Z</text>
      </g>
    </svg>
  );
}

function Watermark() {
  return (
    <svg viewBox="0 0 190 92" className="absolute right-[46px] bottom-[9px] h-[92px] w-[190px]" role="img" aria-label="Baidu Jingyan">
      <g fill="#fff" stroke="#d9d9d9" strokeWidth="2" paintOrder="stroke" fontWeight="700" fontFamily="Liberation Sans, sans-serif">
        <text x="3" y="60" fontSize="41">Bai</text>
        <text x="119" y="59" fontSize="31" fontFamily="Noto Sans CJK SC, sans-serif">经验</text>
        <text x="3" y="85" fontSize="22" fontWeight="400">jingyan.baidu.com</text>
      </g>
      <g fill="#fff" stroke="#d9d9d9" strokeWidth="1.500">
        <ellipse cx="72" cy="27" rx="7" ry="9" />
        <ellipse cx="85" cy="15" rx="7" ry="9" />
        <ellipse cx="101" cy="16" rx="7" ry="9" />
        <ellipse cx="111" cy="31" rx="7" ry="9" />
        <path d="M91 28c8 0 10 8 16 13 9 8 8 20-3 20-8 0-18-2-26 0-11 1-13-11-5-19 6-6 10-14 18-14z" />
      </g>
      <text x="76" y="56" fontSize="24" fontWeight="700" fill="#fff" stroke="#cdcdcd" strokeWidth="2" paintOrder="stroke" fontFamily="Liberation Sans, sans-serif">du</text>
    </svg>
  );
}

const PANES = [["home", "Resources"], ["library", "Design library"], ["folder", "File explorer"], ["palette", "View palette"], ["ball", "Appearances"], ["sheet", "Custom properties"]];

function Viewport() {
  return (
    <main className="relative flex-1 overflow-hidden bg-white">
      <Model />
      <Triad />
      <Watermark />
      <div className="mt-[14px] ml-auto grid h-[75px] w-[14px] auto-rows-fr border-l border-[#aaa]">
        {PANES.map(([name, label]) => (
          <button key={name} aria-label={label} className={`flex items-center justify-center border-b border-[#aaa] ${name === "ball" ? "bg-white" : "bg-[#d0d0d0]"}`}>
            <Icon name={name} />
          </button>
        ))}
      </div>
    </main>
  );
}

function StatusBar() {
  return (
    <footer className="flex h-[11px] items-center border-t border-[#b5b5b5] bg-[#f4f4f4] text-[#111]">
      <span className="flex-1">SOLIDWORKS Premium 2017 x64 Edition</span>
      <span className="flex h-full w-[42px] items-center justify-center border-x border-[#dcdcdc]">Editing Part</span>
      <span className="mr-[18px] h-full w-[8px] border-r border-[#dcdcdc]" />
      <div className="-mt-[2px] flex h-[12px] w-[75px] items-center justify-around border border-[#b9cfdc] bg-[#edf6fb] text-[8px] leading-none text-[#2d7fd0]">
        <svg viewBox="0 0 16 16" className="h-[9px] w-[9px]"><rect x="1" y="1" width="14" height="14" rx="3" fill="#fff" stroke="#23b15a" strokeWidth="2" /><path d="M12 4C6 3 4 6 8 8s3 5-4 4" fill="none" stroke="#23b15a" strokeWidth="2.500" /></svg>
        <span className="font-['Noto_Sans_CJK_SC',sans-serif]">五</span>
        <svg viewBox="0 0 16 16" className="h-[8px] w-[8px]"><path d="M11 1c5 6 1 15-9 13 7-1 10-6 9-13z" fill="#2d7fd0" /></svg>
        <span>°,</span>
        <svg viewBox="0 0 16 12" className="h-[7px] w-[9px]"><rect width="16" height="12" rx="1" fill="#2d7fd0" /><path d="M2 3h12M2 6h12M4 9h8" stroke="#fff" strokeDasharray="2 1" /></svg>
        <svg viewBox="0 0 16 16" className="h-[8px] w-[8px]"><circle cx="8" cy="4" r="3" fill="#999" /><path d="M5 7h6l1 8H4z" fill="#999" /></svg>
        <svg viewBox="0 0 16 16" className="h-[8px] w-[8px]"><path d="M1 13l7-7c0-4 3-6 6-5l-3 3 1 2 3-2c1 4-3 6-6 5l-6 6z" fill="#2d7fd0" /></svg>
      </div>
    </footer>
  );
}

export default function App() {
  return (
    <div className="flex h-screen flex-col overflow-hidden bg-white text-[6px] leading-[8px] font-['Open_Sans','Noto_Sans',sans-serif]">
      <TitleBar />
      <Ribbon />
      <TabRow />
      <div className="flex min-h-0 flex-1">
        <SideTools />
        <FeaturePanel />
        <Viewport />
      </div>
      <StatusBar />
    </div>
  );
}
